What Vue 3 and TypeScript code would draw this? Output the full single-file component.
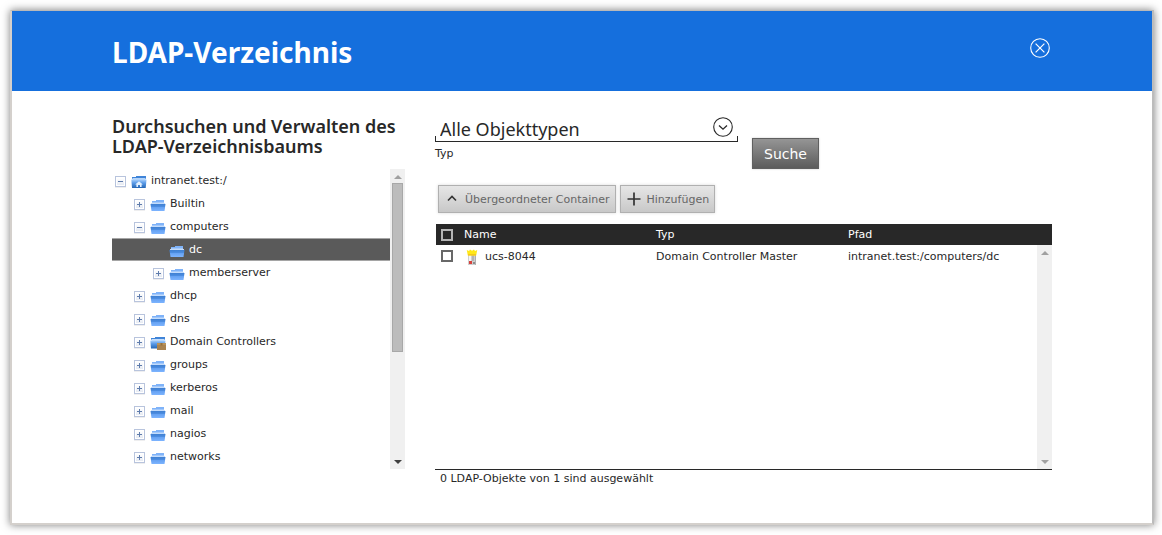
<script setup lang="ts">
import { ref, computed } from 'vue'

interface TreeNode {
  label: string
  level: number
  state: 'open' | 'closed' | 'leaf'
  icon: 'folder' | 'home' | 'unit'
}

interface LdapObject {
  name: string
  type: string
  path: string
}

const nodes: TreeNode[] = [
  { label: 'intranet.test:/', level: 0, state: 'open', icon: 'home' },
  { label: 'Builtin', level: 1, state: 'closed', icon: 'folder' },
  { label: 'computers', level: 1, state: 'open', icon: 'folder' },
  { label: 'dc', level: 2, state: 'leaf', icon: 'folder' },
  { label: 'memberserver', level: 2, state: 'closed', icon: 'folder' },
  { label: 'dhcp', level: 1, state: 'closed', icon: 'folder' },
  { label: 'dns', level: 1, state: 'closed', icon: 'folder' },
  { label: 'Domain Controllers', level: 1, state: 'closed', icon: 'unit' },
  { label: 'groups', level: 1, state: 'closed', icon: 'folder' },
  { label: 'kerberos', level: 1, state: 'closed', icon: 'folder' },
  { label: 'mail', level: 1, state: 'closed', icon: 'folder' },
  { label: 'nagios', level: 1, state: 'closed', icon: 'folder' },
  { label: 'networks', level: 1, state: 'closed', icon: 'folder' },
]

const objects: LdapObject[] = [
  { name: 'ucs-8044', type: 'Domain Controller Master', path: 'intranet.test:/computers/dc' },
]

const active = ref('dc')
const objectType = ref('all')
const checked = ref<string[]>([])
const allChecked = computed({
  get: () => checked.value.length === objects.length,
  set: (on: boolean) => {
    checked.value = on ? objects.map((o) => o.name) : []
  },
})
</script>

<template>
  <div class="page">
    <svg class="defs" width="0" height="0" aria-hidden="true">
      <defs>
        <linearGradient id="g-front" x1="0" y1="0" x2="0" y2="1">
          <stop offset="0" stop-color="#3f80d2" />
          <stop offset="0.35" stop-color="#4a8bdf" />
          <stop offset="0.5" stop-color="#67a3f3" />
          <stop offset="1" stop-color="#7db4ff" />
        </linearGradient>
        <linearGradient id="g-home" x1="0" y1="0" x2="0" y2="1">
          <stop offset="0" stop-color="#a9d0fb" />
          <stop offset="0.4" stop-color="#5b9be8" />
          <stop offset="1" stop-color="#2466b4" />
        </linearGradient>
        <linearGradient id="g-box" x1="0" y1="0" x2="0" y2="1">
          <stop offset="0" stop-color="#fff" />
          <stop offset="1" stop-color="#e6eaf2" />
        </linearGradient>
      </defs>
    </svg>
    <main class="window">
      <header class="bar">
        <h1>LDAP-Verzeichnis</h1>
        <button class="close" type="button" aria-label="Schließen">
          <svg width="20" height="20" viewBox="0 0 20 20" fill="none" stroke="#fff">
            <circle cx="10" cy="10" r="9.3" stroke-width="1.1" />
            <path d="M5.6 5.6 14.4 14.4M14.4 5.6 5.6 14.4" stroke-width="1.2" />
          </svg>
        </button>
      </header>

      <div class="content">
        <section class="browse">
          <h2>Durchsuchen und Verwalten des LDAP-Verzeichnisbaums</h2>
          <div class="tree-box">
            <ul class="tree" role="tree">
              <li
                v-for="n in nodes"
                :key="n.label"
                role="treeitem"
                :aria-level="n.level + 1"
                :aria-selected="active === n.label"
                :class="['node', 'level-' + n.level, { active: active === n.label }]"
                @click="active = n.label"
              >
                <svg class="expando" width="16" height="17" viewBox="0 0 16 17" aria-hidden="true">
                  <template v-if="n.state !== 'leaf'">
                    <rect x="0" y="15" width="11" height="1" fill="#eeeeef" />
                    <rect x="0.5" y="4.5" width="10" height="10" fill="#fff" stroke="#b8c4dd" />
                    <rect x="2" y="6" width="7" height="7" fill="url(#g-box)" />
                    <path d="M3 9.5h5" stroke="#5f7cac" />
                    <path v-if="n.state === 'closed'" d="M5.5 7v5" stroke="#5f7cac" />
                  </template>
                </svg>
                <svg class="icon" width="16" height="17" viewBox="0 0 16 17" aria-hidden="true">
                  <template v-if="n.icon === 'folder'">
                    <path d="M2 6h4V5h8v3H2z" fill="#7fb3f9" />
                    <path d="M2 7h12v1H2z" fill="#a3c9fb" />
                    <path d="M1 8h14v1H1z" fill="#c3dcfc" />
                    <path d="M0.5 9h15l-1 7h-13z" fill="url(#g-front)" />
                  </template>
                  <template v-else-if="n.icon === 'home'">
                    <path d="M1 5h4V4h10v3H1z" fill="#3f84d8" />
                    <path d="M1.5 6h13v2h-13z" fill="#b5d5fb" />
                    <path d="M0.3 7.5h15.2l-.8 8.5H1z" fill="url(#g-home)" />
                    <path d="m8 9.3 3.8 3.2h-1.2V15H9v-2H7v2H5.4v-2.5H4.2z" fill="#e2f0ff" />
                  </template>
                  <template v-else>
                    <path d="M1 5h4V4h10v3H1z" fill="#3f84d8" />
                    <path d="M1.5 6h13v2h-13z" fill="#c5defc" />
                    <path d="M0.3 7.5h15.2l-.8 8H1z" fill="url(#g-home)" />
                    <path d="M7 10h9v7H7z" fill="#a98350" />
                    <path d="M7 10h9v2H7z" fill="#b8935c" />
                    <path d="M10.5 10h2v2.5h-2z" fill="#95703e" />
                  </template>
                </svg>
                <span>{{ n.label }}</span>
              </li>
            </ul>
            <div class="scroll" aria-hidden="true">
              <i class="arrow up"></i>
              <i class="thumb"></i>
              <i class="arrow down live"></i>
            </div>
          </div>
        </section>

        <section class="results">
          <form class="search" @submit.prevent>
            <div class="field">
              <div class="select">
                <select id="object-type" v-model="objectType">
                  <option value="all">Alle Objekttypen</option>
                </select>
                <svg class="chevron" width="20" height="20" viewBox="0 0 20 20" fill="none" stroke="#282828" aria-hidden="true">
                  <circle cx="10" cy="10" r="9.3" stroke-width="1.1" />
                  <path d="M6 8.5 10 12.2 14 8.5" stroke-width="1.3" />
                </svg>
              </div>
              <label for="object-type">Typ</label>
            </div>
            <button class="submit" type="submit">Suche</button>
          </form>

          <div class="actions">
            <button type="button">
              <svg width="16" height="16" viewBox="0 0 16 16" fill="none" stroke="#333" aria-hidden="true">
                <path d="M4 9.5 8 5.5 12 9.5" stroke-width="1.6" />
              </svg>
              <span>Übergeordneter Container</span>
            </button>
            <button type="button">
              <svg width="16" height="16" viewBox="0 0 16 16" fill="none" stroke="#333" aria-hidden="true">
                <path d="M1.5 8h13M8 1.5v13" stroke-width="1.7" />
              </svg>
              <span>Hinzufügen</span>
            </button>
          </div>

          <div class="grid">
            <table>
              <thead>
                <tr>
                  <th class="tick"><input v-model="allChecked" type="checkbox" aria-label="Alle auswählen" /></th>
                  <th class="col">Name</th>
                  <th class="col">Typ</th>
                  <th>Pfad</th>
                </tr>
              </thead>
              <tbody>
                <tr v-for="o in objects" :key="o.name">
                  <td class="tick"><input v-model="checked" type="checkbox" :value="o.name" :aria-label="o.name" /></td>
                  <td>
                    <span class="object">
                      <svg width="16" height="16" viewBox="0 0 16 16" aria-hidden="true">
                        <path d="M4 5h8v11H4z" fill="#cfcfcf" />
                        <path d="M5 5h2v7H5z" fill="#f5f5f5" />
                        <path d="M8.5 6h1v6h-1z" fill="#999" />
                        <path d="M11 5h1v11h-1z" fill="#b0b0b0" />
                        <path d="M5 12h3v3H5z" fill="#d8423c" />
                        <path d="M9 13h2v2H9z" fill="#8d8d8d" />
                        <path d="M2.8 1 5 2 6 .5l2 1.2L10 .5l1 1.5 2.2-1-1 5.5H3.8z" fill="#ffe818" />
                        <path d="M4 5h8v1.5H4z" fill="#f6c81c" />
                      </svg>
                      <span>{{ o.name }}</span>
                    </span>
                  </td>
                  <td>{{ o.type }}</td>
                  <td>{{ o.path }}</td>
                </tr>
              </tbody>
            </table>
            <div class="scroll" aria-hidden="true">
              <i class="arrow up"></i>
              <i class="arrow down"></i>
            </div>
          </div>
          <p class="status">{{ checked.length }} LDAP-Objekte von {{ objects.length }} sind ausgewählt</p>
        </section>
      </div>
    </main>
  </div>
</template>

<style>
body {
  margin: 0;
  background: #fff;
}
</style>

<style scoped>
* {
  box-sizing: border-box;
}

.page {
  display: flex;
  min-height: 100vh;
  padding: 10px 8px 10px 10px;
  font-family: "DejaVu Sans", "Noto Sans", sans-serif;
  font-size: 11px;
  line-height: 18px;
  color: #282828;
}

.defs {
  position: absolute;
}

.window {
  flex: 1;
  border: 2px solid #d4d0cc;
  border-top: 1px solid #b9b9b9;
  border-right-color: #bcbcbc;
  background: #fff;
  box-shadow: 0 0 8px rgba(0, 0, 0, 0.5);
}

.bar {
  display: flex;
  justify-content: space-between;
  align-items: flex-start;
  height: 80px;
  padding: 22px 100px 0;
  background: #156fdd;
  color: #fff;
}

h1,
h2,
select {
  font-family: "Noto Sans", "Open Sans", sans-serif;
}

h1 {
  margin: 0;
  font-size: 28px;
  line-height: 38px;
  font-weight: 700;
}

button {
  font: inherit;
}

.close {
  display: flex;
  margin: 5px 2px 0 0;
  padding: 0;
  border: 0;
  background: none;
}

.content {
  display: flex;
  gap: 30px;
  padding: 26px 100px 33px;
}

.browse {
  flex: 0 0 293px;
  margin-top: -1px;
}

h2 {
  margin: 0 0 13px;
  font-size: 18px;
  line-height: 20px;
  font-weight: 600;
}

.tree-box {
  display: flex;
  height: 300px;
}

.tree {
  flex: 1;
  margin: 0;
  padding: 0;
  list-style: none;
  overflow: hidden;
}

.node {
  display: flex;
  align-items: center;
  height: 23px;
  padding-left: 3px;
  border: solid transparent;
  border-width: 1px 0;
}

.level-1 {
  padding-left: 22px;
}

.level-2 {
  padding-left: 41px;
}

.node.active {
  border-color: #a5a5a5;
  background: #5a5a5a;
  color: #fff;
}

.node .icon {
  margin-right: 4px;
}

/* One pixel of headroom centres the lowercase text on the icons. */
.node span,
.object span,
.actions span {
  padding-top: 1px;
}

.scroll {
  display: flex;
  flex: 0 0 15px;
  flex-direction: column;
  align-items: center;
  justify-content: space-between;
  padding: 6px 0 5px;
  background: #f0f0f0;
}

.arrow {
  border: 4px solid transparent;
}

.up {
  border-top: 0;
  border-bottom-color: #a0a0a0;
}

.down {
  border-bottom: 0;
  border-top-color: #a0a0a0;
}

.live {
  border-top-color: #404040;
}

.thumb {
  width: 11px;
  height: 169px;
  margin: 4px 0 auto;
  border: 1px solid #a8a8a8;
  background: #bcbcbc;
}

.results {
  flex: 1;
  min-width: 0;
}

.search {
  display: flex;
  align-items: flex-start;
  gap: 14px;
}

.field {
  flex: 0 1 303px;
}

.field label {
  display: block;
  margin-top: 3px;
}

.select {
  position: relative;
  border-bottom: 1px solid #282828;
}

.select::after {
  content: "";
  position: absolute;
  inset: auto 0 0;
  height: 5px;
  border: solid #282828;
  border-width: 0 1px;
  pointer-events: none;
}

select {
  display: block;
  width: 100%;
  height: 24px;
  padding: 0 30px 0 5px;
  border: 0;
  outline: 0;
  appearance: none;
  background: none;
  color: inherit;
  font-size: 18px;
  line-height: 24px;
}

.chevron {
  position: absolute;
  top: 0;
  right: 5px;
  pointer-events: none;
}

.submit {
  width: 67px;
  height: 31px;
  margin-top: 21px;
  padding: 0;
  border: 1px solid #606060;
  background: linear-gradient(#959595, #5c5c5c);
  box-shadow: 0 0 2px rgba(0, 0, 0, 0.2);
  color: #fff;
  font-size: 14px;
}

.actions {
  display: flex;
  gap: 4px;
  margin: 16px 0 11px 3px;
}

.actions button {
  display: flex;
  align-items: center;
  gap: 5px;
  height: 28px;
  padding: 0 5px;
  border: 1px solid #b0b0b0;
  background: linear-gradient(#e6e6e6, #c8c8c8);
  box-shadow: 0 0 3px rgba(0, 0, 0, 0.15);
  color: #666;
}

.grid {
  display: flex;
  height: 246px;
  border-bottom: 1px solid #282828;
}

.grid .scroll {
  margin-top: 21px;
}

table {
  flex: 1;
  align-self: flex-start;
  margin-left: 1px;
  border-collapse: collapse;
  table-layout: fixed;
  text-align: left;
}

thead {
  background: #282828;
  color: #fff;
  box-shadow: 15px 0 #282828;
}

th,
td {
  height: 21px;
  padding: 1px 0 0;
  font-weight: 400;
}

td {
  height: 22px;
}

.tick {
  width: 28px;
  padding: 0 0 0 5px;
}

.col {
  width: 192px;
}

input {
  display: block;
  width: 12px;
  height: 12px;
  margin: 0;
  border: 2px solid #686868;
  appearance: none;
  background: #fff;
}

th input {
  border-color: #b5b5b5;
  background: none;
}

input:checked {
  background: #156fdd;
}

.object {
  display: flex;
  align-items: center;
  gap: 5px;
}

.status {
  margin: 0;
  padding-left: 5px;
}
</style>
